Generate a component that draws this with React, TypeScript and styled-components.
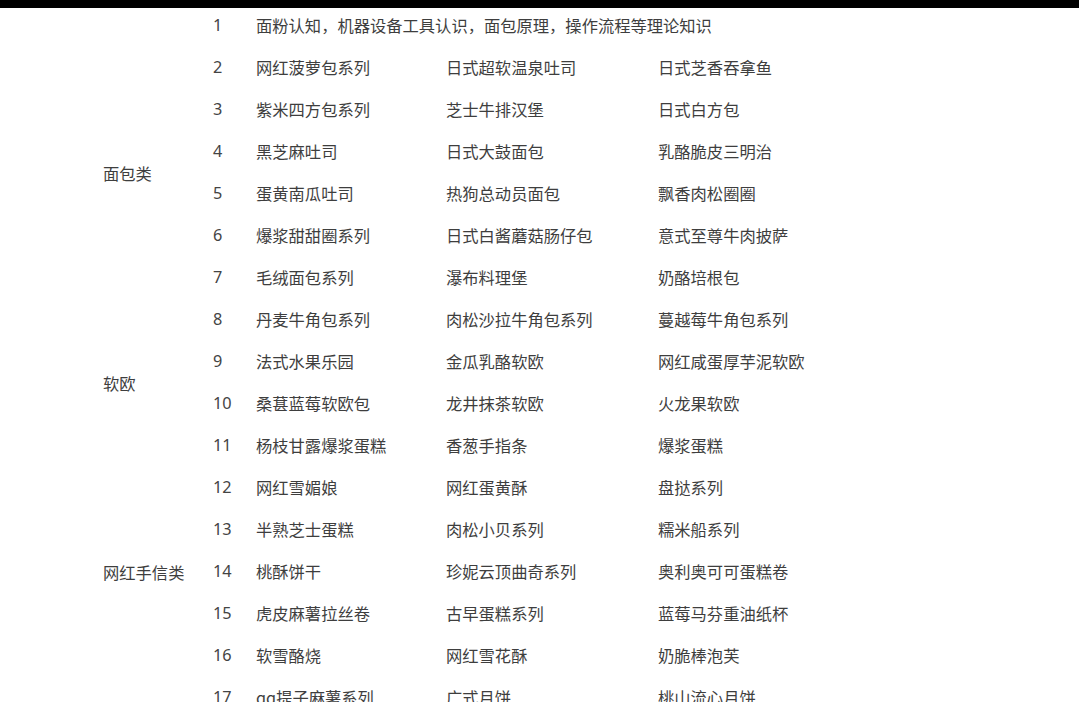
import React from "react";
import styled, { createGlobalStyle } from "styled-components";

const Global = createGlobalStyle`
  html, body { margin: 0; padding: 0; background: #ffffff; overflow: hidden; }
  body { font-family: "Noto Sans CJK SC", "Noto Sans", sans-serif; }
`;

const TopBar = styled.div`
  height: 8px;
  background: #000000;
`;

const Grid = styled.div`
  display: grid;
  grid-template-columns: 110px 43px 190px 212px 1fr;
  grid-auto-rows: 42px;
  padding-left: 103px;
  color: #3e3e3e;
  font-size: 16.3px;
  line-height: 20px;
`;

const Cell = styled.div<{ $span?: number; $col?: number }>`
  display: flex;
  align-items: center;
  padding-bottom: 8px;
  white-space: nowrap;
  ${(p) => (p.$col ? `grid-column: ${p.$col} / span ${p.$span ?? 1};` : "")}
`;

const Category = styled.div<{ $start: number; $rows: number }>`
  grid-column: 1;
  grid-row: ${(p) => p.$start} / span ${(p) => p.$rows};
  display: flex;
  align-items: center;
  padding-bottom: 6px;
  white-space: nowrap;
`;

const Num = styled(Cell)`
  grid-column: 2;
  font-family: "Noto Sans", sans-serif;
  color: #444;
`;

const categories = [
  { name: "面包类", start: 1, rows: 8 },
  { name: "软欧", start: 9, rows: 2 },
  { name: "网红手信类", start: 11, rows: 7 },
];

const rows: string[][] = [
  ["面粉认知，机器设备工具认识，面包原理，操作流程等理论知识"],
  ["网红菠萝包系列", "日式超软温泉吐司", "日式芝香吞拿鱼"],
  ["紫米四方包系列", "芝士牛排汉堡", "日式白方包"],
  ["黑芝麻吐司", "日式大鼓面包", "乳酪脆皮三明治"],
  ["蛋黄南瓜吐司", "热狗总动员面包", "飘香肉松圈圈"],
  ["爆浆甜甜圈系列", "日式白酱蘑菇肠仔包", "意式至尊牛肉披萨"],
  ["毛绒面包系列", "瀑布料理堡", "奶酪培根包"],
  ["丹麦牛角包系列", "肉松沙拉牛角包系列", "蔓越莓牛角包系列"],
  ["法式水果乐园", "金瓜乳酪软欧", "网红咸蛋厚芋泥软欧"],
  ["桑葚蓝莓软欧包", "龙井抹茶软欧", "火龙果软欧"],
  ["杨枝甘露爆浆蛋糕", "香葱手指条", "爆浆蛋糕"],
  ["网红雪媚娘", "网红蛋黄酥", "盘挞系列"],
  ["半熟芝士蛋糕", "肉松小贝系列", "糯米船系列"],
  ["桃酥饼干", "珍妮云顶曲奇系列", "奥利奥可可蛋糕卷"],
  ["虎皮麻薯拉丝卷", "古早蛋糕系列", "蓝莓马芬重油纸杯"],
  ["软雪酪烧", "网红雪花酥", "奶脆棒泡芙"],
  ["qq提子麻薯系列", "广式月饼", "桃山流心月饼"],
];

export default function App() {
  return (
    <>
      <Global />
      <TopBar />
      <Grid>
        {categories.map((c) => (
          <Category key={c.name} $start={c.start} $rows={c.rows}>
            {c.name}
          </Category>
        ))}
        {rows.map((items, i) => (
          <React.Fragment key={i}>
            <Num style={{ gridRow: i + 1 }}>{i + 1}</Num>
            {items.length === 1 ? (
              <Cell $col={3} $span={3} style={{ gridRow: i + 1 }}>
                {items[0]}
              </Cell>
            ) : (
              items.map((t, j) => (
                <Cell key={j} $col={3 + j} style={{ gridRow: i + 1 }}>
                  {t}
                </Cell>
              ))
            )}
          </React.Fragment>
        ))}
      </Grid>
    </>
  );
}
